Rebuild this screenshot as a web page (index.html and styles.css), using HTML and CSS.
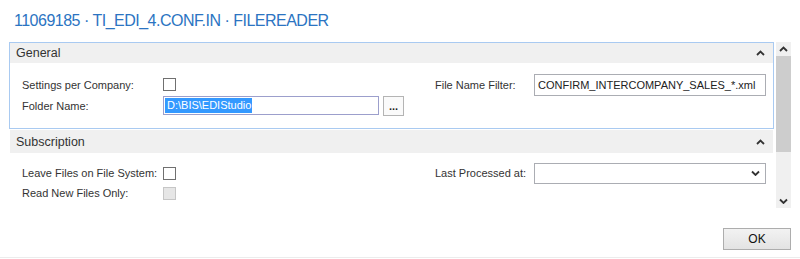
FILE: index.html
```html
<!DOCTYPE html>
<html lang="en">

<head>
    <meta charset="UTF-8">
    <meta name="viewport" content="width=device-width, initial-scale=1.0">
    <title>FILEREADER</title>
    <link rel="stylesheet" href="styles.css">
</head>

<body>
    <div class="window">
        <h1 class="title">11069185 · TI_EDI_4.CONF.IN · FILEREADER</h1>

        <div class="content">
            <div class="sections">
                <section class="fasttab focused">
                    <div class="tab-header">
                        <span>General</span>
                        <svg class="chev" width="9" height="6" viewBox="0 0 9 6"><polyline points="1,5 4.5,1.5 8,5" /></svg>
                    </div>
                    <div class="tab-body">
                        <div class="col">
                            <div class="field">
                                <label>Settings per Company:</label>
                                <span class="check"></span>
                            </div>
                            <div class="field">
                                <label>Folder Name:</label>
                                <div class="textbox folder focus"><span class="sel">D:\BIS\EDIStudio</span></div>
                                <button class="assist">...</button>
                            </div>
                        </div>
                        <div class="col">
                            <div class="field tall">
                                <label class="rlabel">File Name Filter:</label>
                                <div class="textbox wide">CONFIRM_INTERCOMPANY_SALES_*.xml</div>
                            </div>
                        </div>
                    </div>
                </section>

                <section class="fasttab">
                    <div class="tab-header sub">
                        <span>Subscription</span>
                        <svg class="chev" width="9" height="6" viewBox="0 0 9 6"><polyline points="1,5 4.5,1.5 8,5" /></svg>
                    </div>
                    <div class="tab-body sub-body">
                        <div class="col">
                            <div class="field short">
                                <label>Leave Files on File System:</label>
                                <span class="check"></span>
                            </div>
                            <div class="field short">
                                <label>Read New Files Only:</label>
                                <span class="check disabled"></span>
                            </div>
                        </div>
                        <div class="col">
                            <div class="field short">
                                <label class="rlabel">Last Processed at:</label>
                                <div class="textbox wide combo">
                                    <svg class="chev" width="9" height="6" viewBox="0 0 9 6"><polyline points="1,1.5 4.5,5 8,1.5" /></svg>
                                </div>
                            </div>
                        </div>
                    </div>
                </section>
            </div>

            <div class="scrollbar">
                <div class="sb-btn"><svg class="chev" width="9" height="6" viewBox="0 0 9 6"><polyline points="1,5 4.5,1.5 8,5" /></svg></div>
                <div class="sb-thumb"></div>
                <div class="sb-track"></div>
                <div class="sb-btn"><svg class="chev" width="9" height="6" viewBox="0 0 9 6"><polyline points="1,1.5 4.5,5 8,1.5" /></svg></div>
            </div>
        </div>

        <div class="footer">
            <button class="ok">OK</button>
        </div>
    </div>
</body>

</html>
```

FILE: styles.css
```css
* {
    margin: 0;
    padding: 0;
    box-sizing: border-box;
}

body {
    width: 800px;
    height: 259px;
    background: #fff;
    font-family: "Liberation Sans", Arial, sans-serif;
    font-size: 11px;
    color: #333;
    overflow: hidden;
}

.window {
    height: 258px;
    border-bottom: 1px solid #ececec;
}

.title {
    height: 42px;
    padding: 11px 0 0 14px;
    font-size: 16px;
    font-weight: normal;
    line-height: 20px;
    letter-spacing: -0.5px;
    color: #2b74c2;
}

.content {
    display: flex;
    height: 168px;
    padding-left: 9px;
}

.sections {
    width: 765px;
    display: flex;
    flex-direction: column;
}

.fasttab {
    border: 1px solid transparent;
}

.fasttab.focused {
    border-color: #a9caf1;
}

.tab-header {
    height: 20px;
    display: flex;
    align-items: center;
    justify-content: space-between;
    padding: 0 8px 0 6px;
    background: #f0f0f0;
    font-size: 12.5px;
    color: #333;
}

.tab-header.sub {
    height: 23px;
}

.chev polyline {
    fill: none;
    stroke: #333;
    stroke-width: 1.8;
}

.tab-body {
    display: grid;
    grid-template-columns: 413px 1fr;
    padding: 11px 7px 12px 12px;
}

.tab-body.sub-body {
    padding-top: 10px;
}

.field {
    display: flex;
    align-items: center;
    height: 21px;
}

.field.short {
    height: 20px;
}

.field label {
    width: 141px;
    flex: none;
}

.field .rlabel {
    width: 99px;
}

.check {
    width: 13px;
    height: 13px;
    border: 1px solid #707070;
    background: #fff;
}

.check.disabled {
    border-color: #c6c6c6;
    background: #e6e6e6;
}

.textbox {
    height: 19px;
    border: 1px solid #abadb3;
    background: #fff;
    padding: 0 3px;
    display: flex;
    align-items: center;
    font-size: 11px;
    color: #222;
    white-space: nowrap;
}

.textbox.folder {
    width: 216px;
}

.textbox.focus {
    border-color: #9c9fcc;
    padding-left: 1px;
}

.sel {
    background: #3399ff;
    color: #fff;
    padding: 1px 1px 2px 2px;
}

.textbox.wide {
    width: 232px;
    height: 22px;
}

.textbox.combo {
    height: 21px;
    justify-content: flex-end;
    padding-right: 5px;
}

.assist {
    width: 21px;
    height: 20px;
    margin-left: 4px;
    border: 1px solid #b4b4b4;
    background: #fafafa;
    font-family: "Liberation Sans", Arial, sans-serif;
    font-size: 11px;
    font-weight: bold;
    line-height: 12px;
    color: #222;
}

.scrollbar {
    width: 15px;
    height: 166px;
    margin-left: 2px;
    display: flex;
    flex-direction: column;
    background: #f0f0f0;
}

.sb-btn {
    height: 14px;
    display: flex;
    align-items: center;
    justify-content: center;
}

.sb-btn:last-child {
    height: 15px;
}

.sb-thumb {
    height: 96px;
    background: #cdcdcd;
}

.sb-track {
    flex: 1;
}

.footer {
    display: flex;
    justify-content: flex-end;
    padding: 18px 9px 0 0;
}

.ok {
    width: 68px;
    height: 22px;
    border: 1px solid #adadad;
    background: linear-gradient(#f2f2f2, #e3e3e3);
    font-family: "Liberation Sans", Arial, sans-serif;
    font-size: 12px;
    color: #111;
}
```
